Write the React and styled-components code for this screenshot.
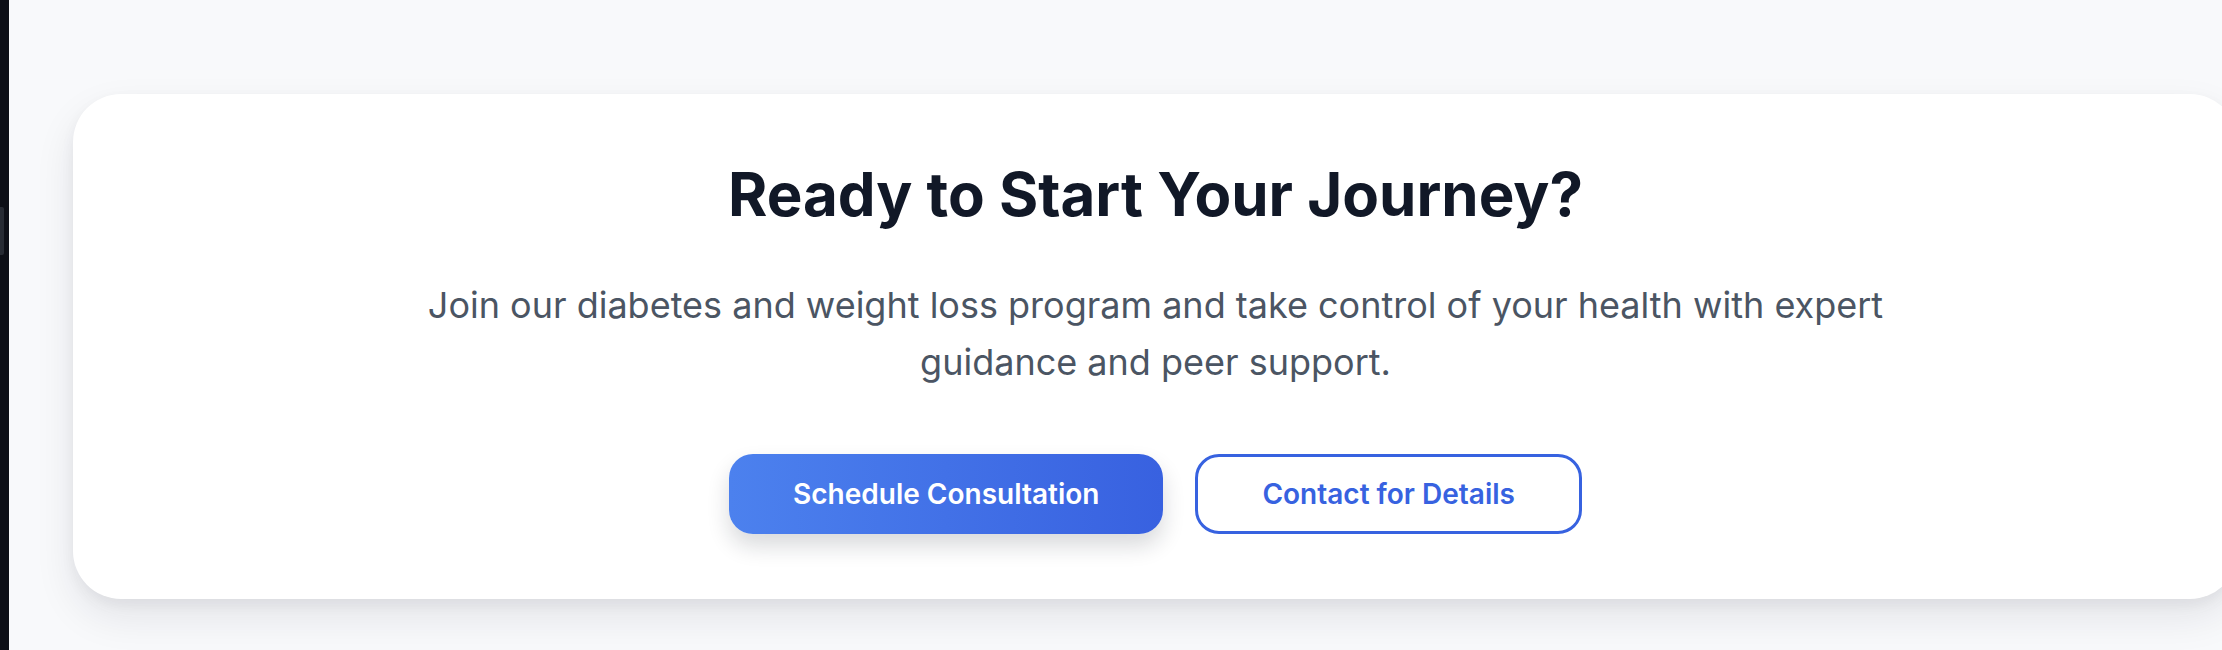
import React from "react";
import styled, { createGlobalStyle } from "styled-components";

const GlobalStyle = createGlobalStyle`
  html, body {
    margin: 0;
    padding: 0;
    height: 100%;
    overflow: hidden;
    background: #f8f9fb;
    font-family: Inter, "Noto Sans", sans-serif;
  }
  #root {
    height: 100%;
  }
`;

const Page = styled.div`
  display: flex;
  height: 100%;
  width: max-content;
  min-width: 100vw;
  background: #f8f9fb;
`;

const EditorEdge = styled.aside`
  position: relative;
  flex: none;
  width: 9px;
  background: #0d0f17;
`;

const ScrollThumb = styled.span`
  position: absolute;
  left: 0;
  top: 207px;
  width: 4px;
  height: 48px;
  border-radius: 0 2px 2px 0;
  background: #272b34;
`;

const Main = styled.main`
  flex: none;
  padding: 94px 0 0 64px;
`;

const CtaCard = styled.section`
  width: 2165px;
  box-sizing: border-box;
  padding: 66px 48px 65px;
  background: #ffffff;
  border-radius: 48px;
  box-shadow: 0 18px 40px rgba(17, 24, 39, 0.09), 0 6px 14px rgba(17, 24, 39, 0.05);
  display: flex;
  flex-direction: column;
  align-items: center;
  text-align: center;
`;

const Title = styled.h2`
  margin: 0;
  font-size: 60px;
  line-height: 69px;
  font-weight: 700;
  color: #111827;
`;

const Lead = styled.p`
  margin: 48px 0 0;
  max-width: 1536px;
  font-size: 36px;
  line-height: 57px;
  font-weight: 400;
  color: #4b5563;
`;

const Actions = styled.div`
  display: flex;
  gap: 32px;
  margin-top: 63px;
`;

const Button = styled.button`
  height: 80px;
  box-sizing: border-box;
  padding: 0 64px;
  border-radius: 24px;
  font-family: Inter, "Noto Sans", sans-serif;
  font-size: 28px;
  font-weight: 600;
  cursor: pointer;
  border: ${({ $outline }) => ($outline ? "3px solid #3762e0" : "none")};
  color: ${({ $outline }) => ($outline ? "#3762e0" : "#ffffff")};
  background: ${({ $outline }) =>
    $outline ? "#ffffff" : "linear-gradient(90deg, #4c81ee 0%, #3861e0 100%)"};
  box-shadow: ${({ $outline }) =>
    $outline ? "none" : "0 12px 22px rgba(17, 24, 39, 0.16)"};
`;

export default function App() {
  return (
    <>
      <GlobalStyle />
      <Page>
        <EditorEdge>
          <ScrollThumb />
        </EditorEdge>
        <Main>
          <CtaCard>
            <Title>Ready to Start Your Journey?</Title>
            <Lead>
              Join our diabetes and weight loss program and take control of your
              health with expert guidance and peer support.
            </Lead>
            <Actions>
              <Button>Schedule Consultation</Button>
              <Button $outline>Contact for Details</Button>
            </Actions>
          </CtaCard>
        </Main>
      </Page>
    </>
  );
}
